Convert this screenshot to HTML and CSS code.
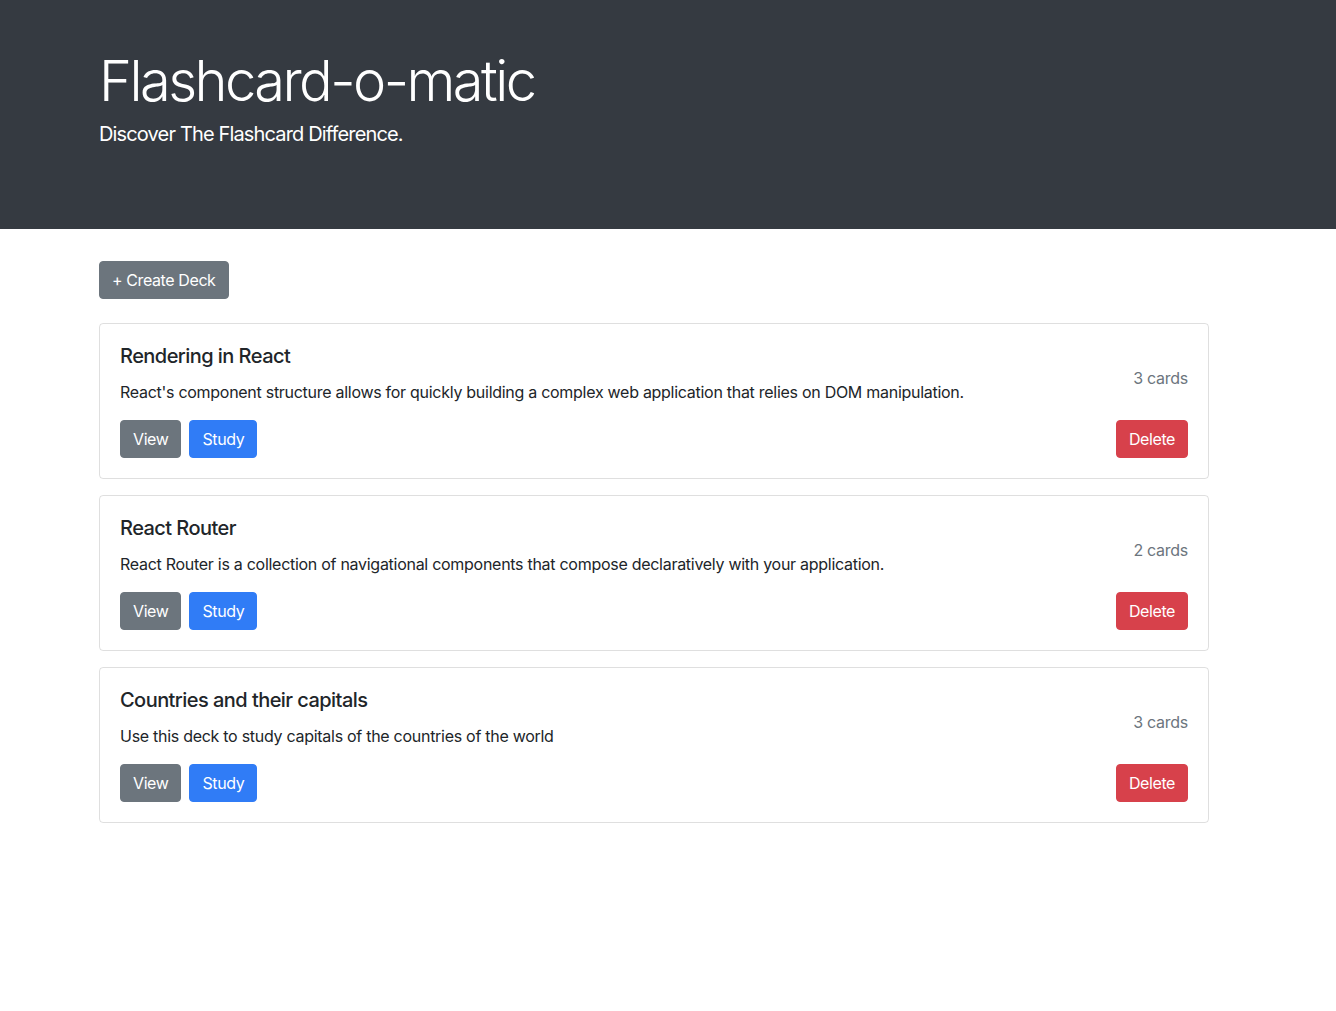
FILE: index.html
```html
<!DOCTYPE html>
<html lang="en">
<head>
<meta charset="utf-8">
<title>Flashcard-o-matic</title>
<link rel="stylesheet" href="styles.css">
</head>
<body>
<header class="hero">
  <div class="container">
    <h1 class="hero-title">Flashcard-o-matic</h1>
    <p class="hero-lead">Discover The Flashcard Difference.</p>
  </div>
</header>
<main class="container">
  <a class="btn btn-secondary create-btn" href="#">+ Create Deck</a>
  <div class="deck-list">
    <article class="deck">
      <div class="deck-top">
        <div class="deck-info">
          <h5 class="deck-title">Rendering in React</h5>
          <p class="deck-desc">React's component structure allows for quickly building a complex web application that relies on DOM manipulation.</p>
        </div>
        <small class="deck-count">3 cards</small>
      </div>
      <div class="deck-actions">
        <a class="btn btn-secondary" href="#">View</a>
        <a class="btn btn-primary" href="#">Study</a>
        <button class="btn btn-danger push-right">Delete</button>
      </div>
    </article>
    <article class="deck">
      <div class="deck-top">
        <div class="deck-info">
          <h5 class="deck-title">React Router</h5>
          <p class="deck-desc">React Router is a collection of navigational components that compose declaratively with your application.</p>
        </div>
        <small class="deck-count">2 cards</small>
      </div>
      <div class="deck-actions">
        <a class="btn btn-secondary" href="#">View</a>
        <a class="btn btn-primary" href="#">Study</a>
        <button class="btn btn-danger push-right">Delete</button>
      </div>
    </article>
    <article class="deck">
      <div class="deck-top">
        <div class="deck-info">
          <h5 class="deck-title">Countries and their capitals</h5>
          <p class="deck-desc">Use this deck to study capitals of the countries of the world</p>
        </div>
        <small class="deck-count">3 cards</small>
      </div>
      <div class="deck-actions">
        <a class="btn btn-secondary" href="#">View</a>
        <a class="btn btn-primary" href="#">Study</a>
        <button class="btn btn-danger push-right">Delete</button>
      </div>
    </article>
  </div>
</main>
</body>
</html>
```
FILE: styles.css
```css
* { box-sizing: border-box; }
html, body {
  margin: 0;
  padding: 0;
  background: #fff;
  color: #212529;
  font-family: Inter, Roboto, "Liberation Sans", Arial, sans-serif;
  font-size: 16px;
  line-height: 1.5;
  letter-spacing: -0.28px;
}
.container {
  width: 1110px;
  margin-left: 99px;
}
.hero {
  background: #353a41;
  color: #fff;
  height: 229px;
  padding-top: 48px;
  margin-bottom: 32px;
}
.hero-title {
  margin: 0 0 4px;
  font-size: 56px;
  font-weight: 300;
  line-height: 1.2;
  letter-spacing: -2.55px;
}
.hero-lead {
  margin: 0;
  font-size: 20px;
  font-weight: 400;
  letter-spacing: -0.85px;
}
.btn {
  display: inline-block;
  padding: 6px 12px;
  font-size: 16px;
  line-height: 24px;
  font-family: inherit;
  letter-spacing: -0.4px;
  border: 1px solid transparent;
  border-radius: 4px;
  color: #fff;
  text-decoration: none;
  cursor: pointer;
}
.btn-secondary { background: #6c757d; border-color: #6c757d; }
.btn-primary { background: #307cf6; border-color: #307cf6; }
.btn-danger { background: #d7414b; border-color: #d7414b; }
.create-btn { margin-bottom: 24px; }
.deck-list {
  display: flex;
  flex-direction: column;
  gap: 16px;
}
.deck {
  border: 1px solid rgba(0,0,0,.125);
  border-radius: 4px;
  padding: 20px;
}
.deck-top {
  display: flex;
  justify-content: space-between;
}
.deck-title {
  margin: 0 0 12px;
  font-size: 20px;
  font-weight: 500;
  line-height: 24px;
  letter-spacing: -0.55px;
}
.deck-desc { margin: 0 0 16px; }
.deck-count {
  font-size: 16px;
  color: #6c757d;
  margin-top: 22px;
}
.deck-actions {
  display: flex;
  gap: 8px;
}
.push-right { margin-left: auto; }
```
